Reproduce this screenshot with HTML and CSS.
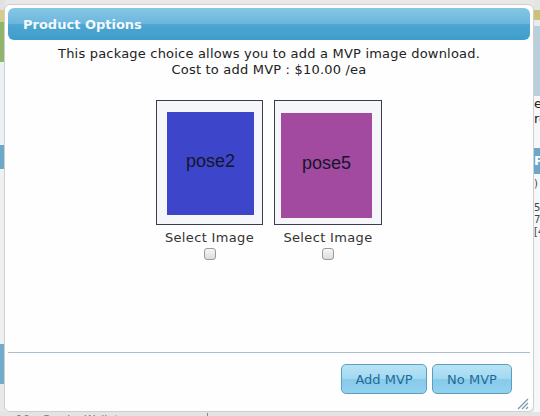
FILE: index.html
```html
<!DOCTYPE html>
<html>
<head>
<meta charset="utf-8">
<link rel="stylesheet" href="styles.css">
</head>
<body>
<div class="page">
  <div class="bg">
    <div class="edge-left">
      <div class="el el-grey"></div>
      <div class="el el-tan"></div>
      <div class="el el-green"></div>
      <div class="el el-white1"></div>
      <div class="el el-blue1"></div>
      <div class="el el-white2"></div>
      <div class="el el-blue2"></div>
      <div class="el el-rest"></div>
    </div>
    <div class="bg-center"></div>
    <div class="edge-right">
      <div class="er er-grey"></div>
      <div class="er er-tan"></div>
      <div class="er er-light"></div>
      <div class="er er-lblue"></div>
      <div class="er-text">
        <div class="er-line">ee</div>
        <div class="er-line">re</div>
        <div class="er-bar">P</div>
        <div class="er-line small">)</div>
        <div class="er-gap"></div>
        <div class="er-line small">5</div>
        <div class="er-line small">7</div>
        <div class="er-line small">[4</div>
      </div>
    </div>
  </div>
  <div class="bg-bottom"><span class="bb-num">10</span><span class="bb-text">Combo Wallet</span><span class="bb-line"></span></div>
</div>

<div class="dialog">
  <div class="titlebar"><span class="title">Product Options</span></div>
  <div class="content">
    <p class="msg">This package choice allows you to add a MVP image download.<br>Cost to add MVP : $10.00 /ea</p>
    <div class="options">
      <div class="option">
        <div class="frame frame-a"><div class="pic pic-a">pose2</div></div>
        <div class="label">Select Image</div>
        <input type="checkbox" class="check">
      </div>
      <div class="option">
        <div class="frame frame-b"><div class="pic pic-b">pose5</div></div>
        <div class="label">Select Image</div>
        <input type="checkbox" class="check">
      </div>
    </div>
  </div>
  <div class="buttonpane">
    <button class="btn btn-add">Add MVP</button>
    <button class="btn btn-no">No MVP</button>
  </div>
  <svg class="grip" width="12" height="12" viewBox="0 0 12 12">
    <path d="M11 1 L1 11 M11 5 L5 11 M11 9 L9 11" stroke="#7a98ac" stroke-width="1.2" fill="none"/>
  </svg>
</div>
</body>
</html>
```

FILE: styles.css
```css
* { box-sizing: border-box; }
html, body {
  margin: 0;
  padding: 0;
  width: 540px;
  height: 416px;
  overflow: hidden;
  background: #e6e6e6;
  font-family: "DejaVu Sans", Verdana, sans-serif;
}
.page {
  width: 540px;
  height: 416px;
  display: flex;
  flex-direction: column;
}
.bg {
  height: 412px;
  display: flex;
}
.edge-left {
  width: 5px;
  display: flex;
  flex-direction: column;
}
.el-grey { height: 10px; background: #e2e2e2; }
.el-tan { height: 12px; background: #d6cc8c; }
.el-green { height: 40px; background: #8fb46c; }
.el-white1 { height: 83px; background: #eef1f3; }
.el-blue1 { height: 24px; background: #6ea8c8; }
.el-white2 { height: 175px; background: #eef0f2; }
.el-blue2 { height: 40px; background: #72acca; }
.el-rest { flex: 1; background: #e8e8e8; }
.bg-center { flex: 1; background: #e8e8e8; }
.edge-right {
  width: 6px;
  display: flex;
  flex-direction: column;
  overflow: hidden;
  background: #f6f7f8;
}
.er-grey { height: 10px; background: #e4e4e4; }
.er-tan { height: 10px; background: #cbc27a; }
.er-light { height: 6px; background: #e8ecee; }
.er-lblue { height: 70px; background: #b9cfdb; }
.er-text {
  font-size: 13px;
  color: #222;
  line-height: 15px;
  white-space: nowrap;
}
.er-line { height: 15px; }
.er-line.small { font-size: 10px; color: #444; line-height: 12px; height: 12px; }
.er-bar {
  margin-top: 22px;
  height: 26px;
  line-height: 26px;
  background: #6aa8c8;
  color: #fff;
  font-weight: bold;
  margin-bottom: 4px;
}
.er-gap { height: 12px; }
.bg-bottom {
  flex: 1;
  overflow: hidden;
  display: flex;
  align-items: flex-start;
  font-size: 11px;
  line-height: 14px;
  padding-top: 1px;
  color: #777;
  background: #e4e4e4;
}
.bb-num { margin-left: 16px; width: 26px; }
.bb-text { width: 165px; }
.bb-line { width: 1px; height: 4px; background: #888; }

.dialog {
  position: absolute;
  left: 4px;
  top: 4px;
  width: 530px;
  height: 408px;
  border: 1px solid #cfcfcf;
  border-radius: 6px;
  padding: 3px;
  background: #fefefe;
  display: flex;
  flex-direction: column;
}
.titlebar {
  height: 32px;
  border-radius: 6px;
  background: linear-gradient(#86c6e4 0%, #6cb7dd 48%, #4ea6d1 52%, #3f9dca 100%);
  display: flex;
  align-items: center;
  padding-left: 15px;
}
.title {
  color: #f2f9fd;
  font-weight: bold;
  font-size: 13px;
}
.content {
  flex: 1;
  padding-top: 6px;
  text-align: center;
  font-size: 13px;
  line-height: 16px;
  letter-spacing: 0.2px;
  color: #222;
}
.msg { margin: 0; }
.options {
  margin-top: 22px;
  display: flex;
  justify-content: center;
  gap: 11px;
  letter-spacing: 0;
}
.option {
  display: flex;
  flex-direction: column;
  align-items: center;
}
.frame {
  height: 125px;
  border: 1px solid #3b3b4e;
  background: #f5f6fa;
}
.frame-a { width: 107px; padding: 11px 0 0 10px; }
.frame-b { width: 108px; padding: 12px 0 0 6px; }
.pic {
  display: flex;
  align-items: center;
  justify-content: center;
  font-family: "Liberation Sans", Arial, sans-serif;
  font-size: 18px;
  color: #15152a;
  padding-bottom: 6px;
}
.pic-a { width: 87px; height: 103px; background: #3d46cb; }
.pic-b { width: 91px; height: 105px; background: #a14aa0; }
.label {
  margin-top: 5px;
  color: #333;
  letter-spacing: 0.35px;
}
.check {
  appearance: none;
  -webkit-appearance: none;
  margin: 2px 0 0 0;
  width: 12px;
  height: 12px;
  border: 1px solid #9a9a9a;
  border-radius: 3px;
  background: linear-gradient(#f6f6f6, #dcdcdc);
}
.buttonpane {
  height: 56px;
  border-top: 1px solid #a9bfcb;
  display: flex;
  justify-content: flex-end;
  align-items: flex-start;
  padding: 11px 18px 0 0;
  gap: 5px;
}
.btn {
  height: 30px;
  border: 1px solid #5b9ec2;
  border-radius: 5px;
  background: linear-gradient(#b9e3f5 0%, #a3d9f1 48%, #86cbea 52%, #93d1ee 100%);
  color: #1f6b98;
  font-family: "DejaVu Sans", Verdana, sans-serif;
  font-size: 13px;
  padding: 0;
}
.btn-add { width: 86px; }
.btn-no { width: 80px; }
.grip {
  position: absolute;
  right: 4px;
  bottom: 1px;
}
```
